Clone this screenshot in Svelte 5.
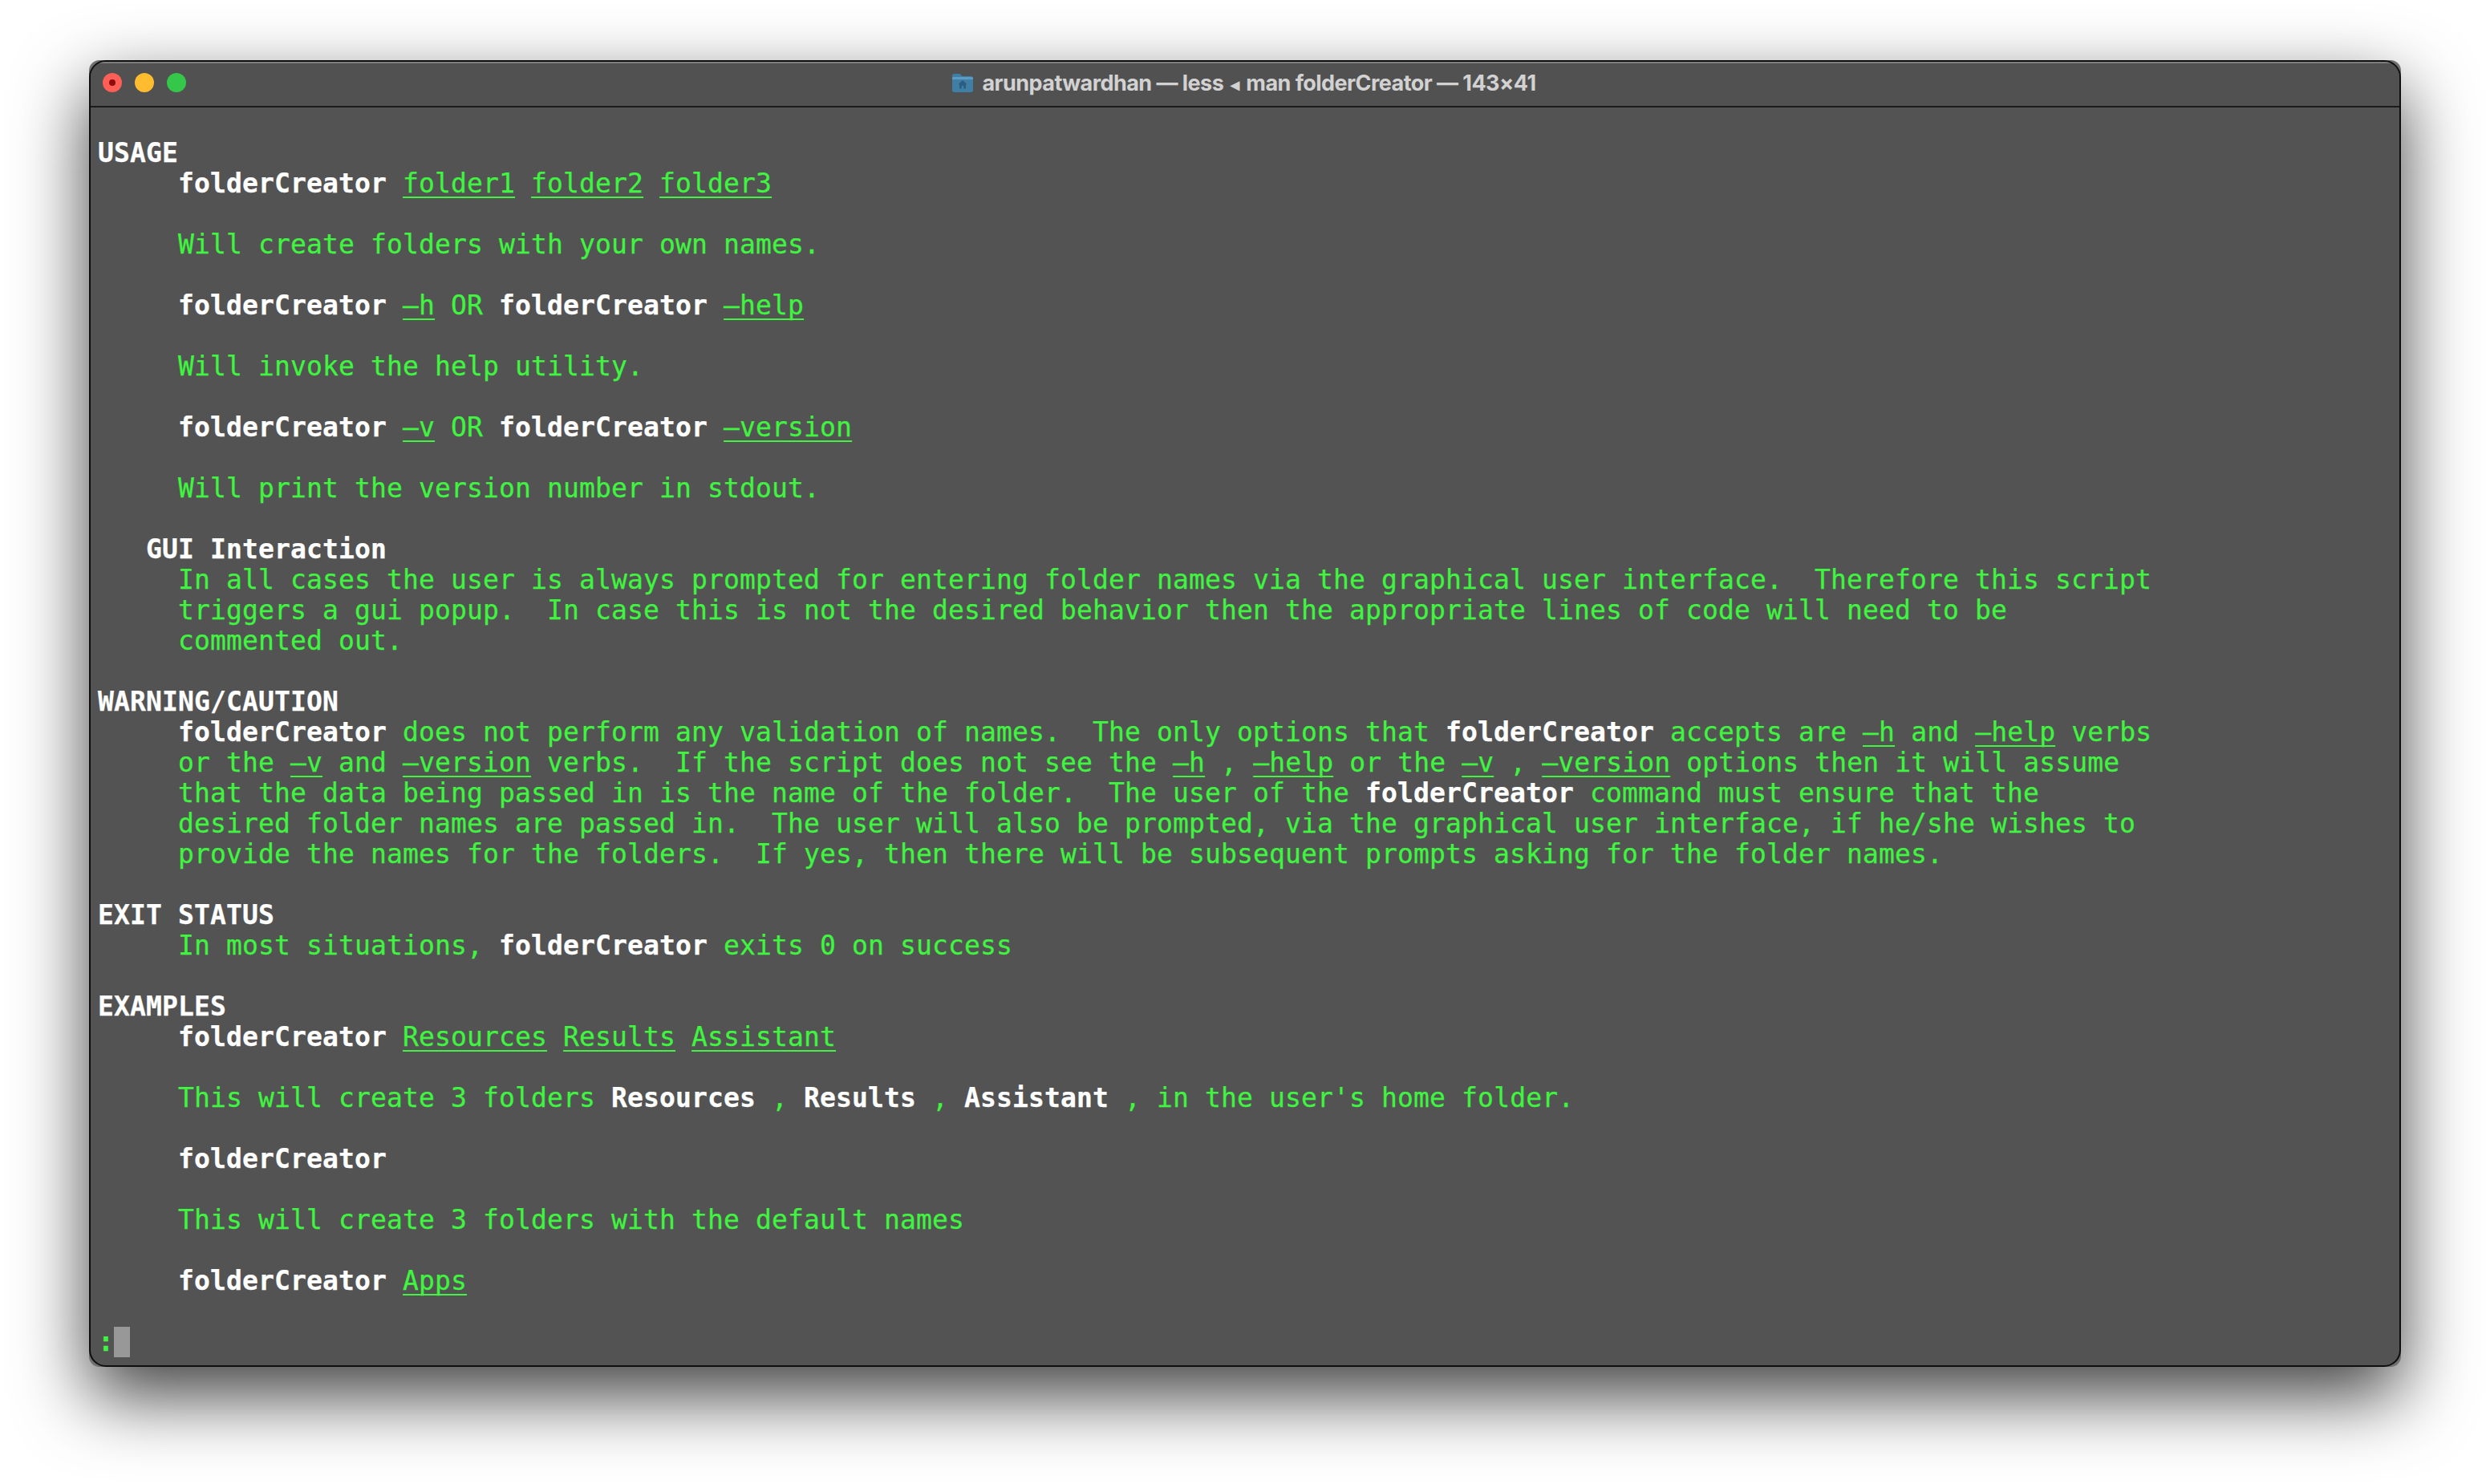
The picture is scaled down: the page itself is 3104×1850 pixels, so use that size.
<script>
  // *bold* and _underlined_ follow man page's nroff output
  const page = [
    "",
    "*USAGE*",
    "     *folderCreator* _folder1_ _folder2_ _folder3_",
    "",
    "     Will create folders with your own names.",
    "",
    "     *folderCreator* _–h_ OR *folderCreator* _–help_",
    "",
    "     Will invoke the help utility.",
    "",
    "     *folderCreator* _–v_ OR *folderCreator* _–version_",
    "",
    "     Will print the version number in stdout.",
    "",
    "   *GUI Interaction*",
    "     In all cases the user is always prompted for entering folder names via the graphical user interface.  Therefore this script",
    "     triggers a gui popup.  In case this is not the desired behavior then the appropriate lines of code will need to be",
    "     commented out.",
    "",
    "*WARNING/CAUTION*",
    "     *folderCreator* does not perform any validation of names.  The only options that *folderCreator* accepts are _–h_ and _–help_ verbs",
    "     or the _–v_ and _–version_ verbs.  If the script does not see the _–h_ , _–help_ or the _–v_ , _–version_ options then it will assume",
    "     that the data being passed in is the name of the folder.  The user of the *folderCreator* command must ensure that the",
    "     desired folder names are passed in.  The user will also be prompted, via the graphical user interface, if he/she wishes to",
    "     provide the names for the folders.  If yes, then there will be subsequent prompts asking for the folder names.",
    "",
    "*EXIT STATUS*",
    "     In most situations, *folderCreator* exits 0 on success",
    "",
    "*EXAMPLES*",
    "     *folderCreator* _Resources_ _Results_ _Assistant_",
    "",
    "     This will create 3 folders *Resources* , *Results* , *Assistant* , in the user's home folder.",
    "",
    "     *folderCreator*",
    "",
    "     This will create 3 folders with the default names",
    "",
    "     *folderCreator* _Apps_",
    "",
  ];

  const parse = (line) =>
    line.split(/(\*[^*]+\*|_[^_]+_)/).filter(Boolean).map((part) => {
      if (part[0] === "*") return { kind: "bold", text: part.slice(1, -1) };
      if (part[0] === "_") return { kind: "under", text: part.slice(1, -1) };
      return { kind: "plain", text: part };
    });

  const rows = page.map(parse);
</script>

<div class="window">
  <div class="frame">
    <header class="titlebar">
      <div class="lights">
        <span class="light red"><i></i></span>
        <span class="light yellow"></span>
        <span class="light green"></span>
      </div>
      <div class="title">
        <svg class="folder" width="28" height="26" viewBox="0 0 28 26">
          <path d="M1 4.500C1 3 2 2 3.500 2h6.200c.8 0 1.300.3 1.800.8L13.400 5h11.100C26 5 27 6 27 7.500v15c0 1.500-1 2.500-2.500 2.500h-21C2 25 1 24 1 22.500z" fill="#3f7fa6"/>
          <path d="M1 7.500C1 6.400 2 6 3.500 6h21C26 6 27 6.400 27 7.500V9H1z" fill="#5b9cc4"/>
          <path d="M14 10l-5.500 5H10v5.500h2.800v-3.500h2.400v3.500H18V15h1.500z" fill="#2b5f82"/>
        </svg>
        <span>arunpatwardhan — less <span class="sep">◂</span> man folderCreator — 143×41</span>
      </div>
    </header>

    <main class="screen">
      {#each rows as row}
        <div class="row">
          {#each row as seg}<span class={seg.kind}>{seg.text}</span>{/each}
        </div>
      {/each}
      <div class="row"><span class="prompt">:</span><span class="cursor"></span></div>
    </main>
  </div>
</div>

<style>
  :global(body) {
    margin: 0;
    background: #fff;
    height: 1850px;
    overflow: hidden;
  }

  .window {
    width: 2882px;
    height: 1629px;
    margin: 75px 0 0 111px;
    background: #6f6f6f;
    border-radius: 13px;
    box-shadow: 0 36px 90px rgba(0, 0, 0, 0.75);
  }

  .frame {
    box-sizing: border-box;
    height: 100%;
    background: #535353;
    border: 2px solid #0e0e0e;
    border-radius: 21px;
    overflow: hidden;
  }

  .titlebar {
    box-sizing: border-box;
    height: 57px;
    display: grid;
    grid-template-columns: 1fr auto 1fr;
    align-items: center;
    padding-bottom: 3px;
    border-bottom: 2px solid #1c1c1c;
    background: #515151;
    box-shadow: inset 0 2px #7d7d7d;
  }

  .lights {
    display: flex;
    gap: 16px;
    padding-left: 15px;
  }

  .light {
    width: 24px;
    height: 24px;
    border-radius: 50%;
    display: flex;
    align-items: center;
    justify-content: center;
  }

  .red { background: #ff5f57; }
  .red i {
    width: 8px;
    height: 8px;
    border-radius: 50%;
    background: #8f0c0c;
  }
  .yellow { background: #febc2e; }
  .green { background: #34c749; }

  .title {
    display: flex;
    align-items: center;
    gap: 10px;
    margin-right: 3px;
    color: #d2d2d2;
    font: 700 27px "Inter", "Liberation Sans", sans-serif;
    letter-spacing: -0.55px;
  }

  .sep {
    font-size: 22px;
    padding: 0 3px;
  }

  .folder {
    display: block;
  }

  .screen {
    padding: 0 0 0 9px;
    font-family: "DejaVu Sans Mono", "Liberation Mono", monospace;
    font-size: 33px;
    color: #3ff53f;
    letter-spacing: 0.133px;
    -webkit-text-stroke: 0.25px currentColor;
  }

  .row {
    height: 38px;
    line-height: 38px;
    white-space: pre;
    width: 2860px;
    display: flex;
  }

  .bold {
    color: #fff;
    font-weight: 700;
  }

  .prompt {
    font-weight: 700;
  }

  .under {
    text-decoration: underline;
    text-decoration-thickness: 2px;
    text-underline-offset: 5px;
    text-decoration-skip-ink: none;
  }

  .cursor {
    width: 20px;
    height: 38px;
    background: #989898;
  }
</style>
